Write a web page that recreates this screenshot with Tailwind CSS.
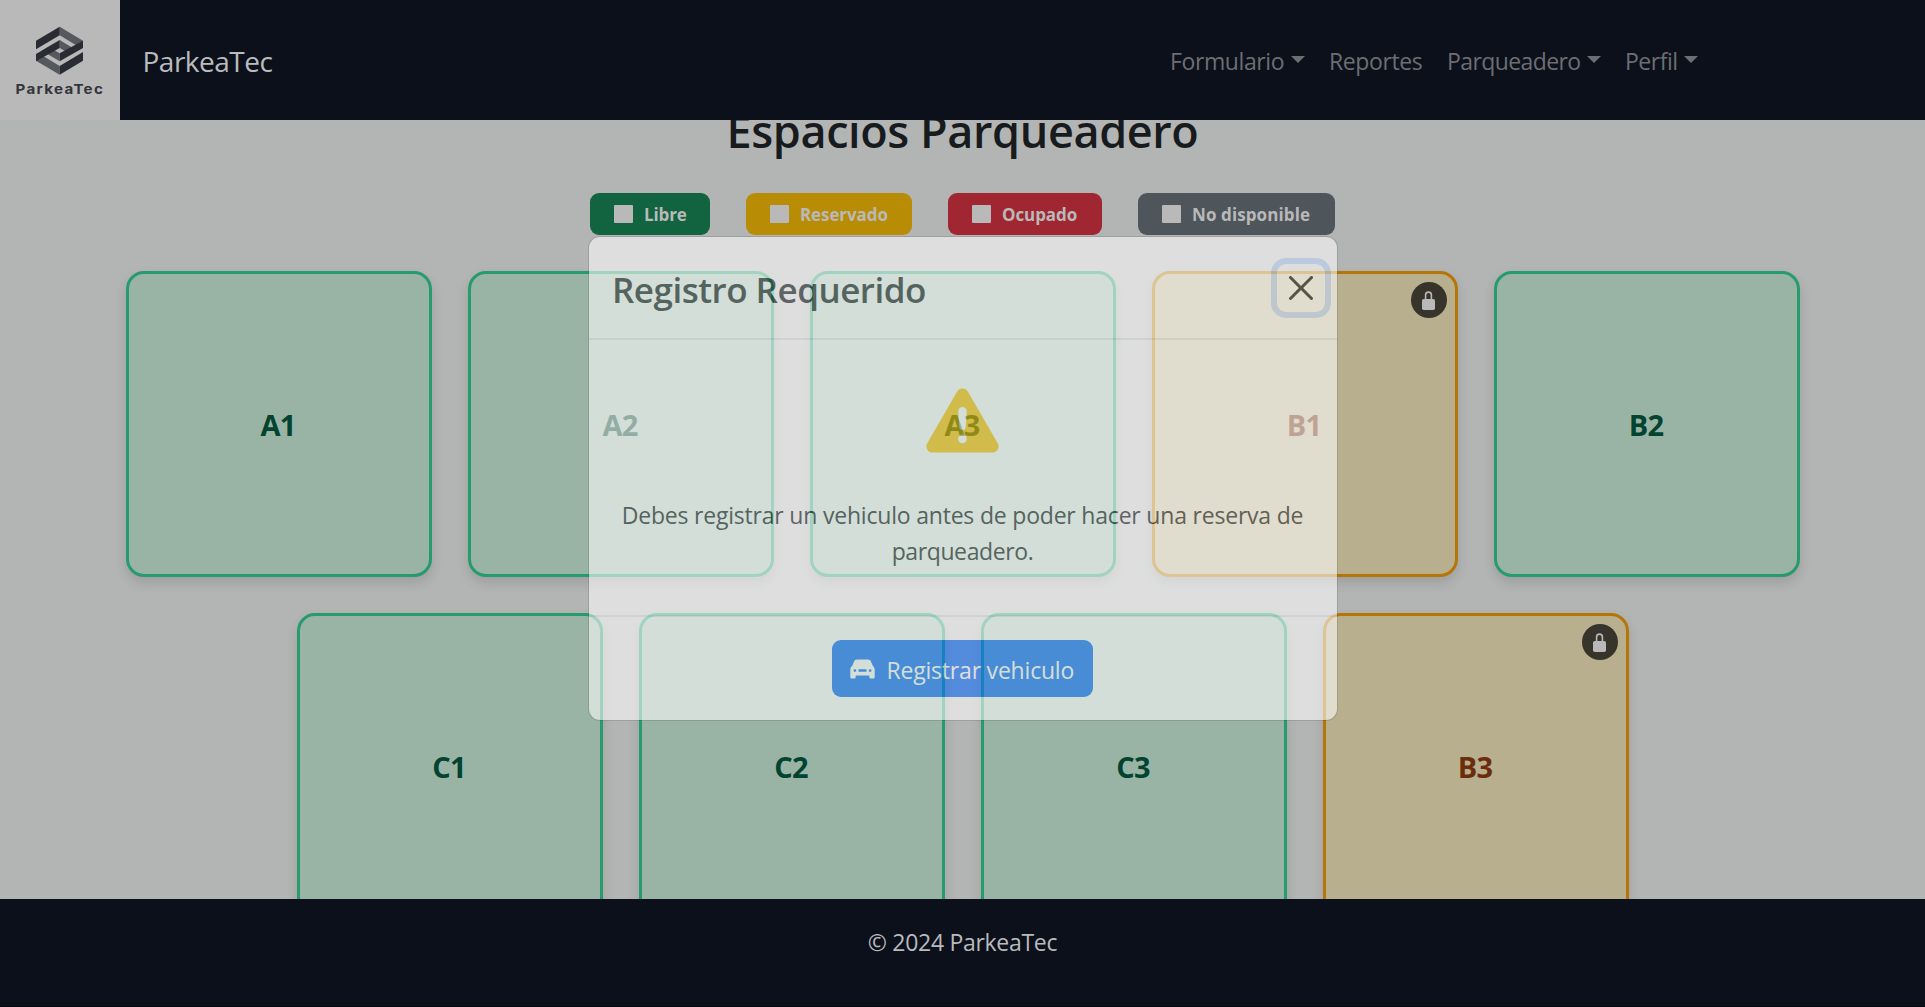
<!DOCTYPE html>
<html lang="es">
<head>
<meta charset="utf-8">
<title>ParkeaTec</title>
<script src="https://cdn.jsdelivr.net/npm/@tailwindcss/browser@4"></script>
</head>
<body class="relative flex h-[1007px] flex-col overflow-hidden bg-[#b3b5b4] font-['Open_Sans',sans-serif]">

<header class="flex h-[120px] shrink-0 items-center bg-[#0c101b] pr-[227px]">
  <div class="h-[120px] w-[119.5px] shrink-0 bg-[#b9b9b9]">
    <svg class="size-full" viewBox="0 0 119.5 120">
      <g transform="translate(10 20) scale(.33333)">
        <g fill="#57585d">
          <path d="M149 20 219 62V68L202 78 149 46Z"/>
          <path d="M149 164 78 122V116L96 106 149 138Z"/>
          <path d="M149 60 202 92 182 103 149 84Z"/>
          <path d="M149 124 96 92 116 81 149 100Z"/>
        </g>
        <g fill="#2a2c33">
          <path d="M149 20 78 62V88L149 46Z"/>
          <path d="M149 164 219 122V96L149 138Z"/>
          <path d="M149 60 78 102V124L149 84Z"/>
          <path d="M149 124 219 84V62L149 100Z"/>
        </g>
      </g>
      <text transform="translate(15.500 94) scale(1.12 1)" textLength="78" class="fill-[#33353b] font-['Inter'] text-[13.5px] font-bold">ParkeaTec</text>
    </svg>
  </div>
  <a class="mt-[2px] ml-[23px] text-[28px] tracking-[-0.5px] text-[#babbbd]">ParkeaTec</a>
  <nav class="mt-[2px] ml-auto flex items-center gap-6 text-[23px] tracking-[-0.4px] text-[#6c6e73]">
    <a class="flex items-center gap-[6px]"><span class="w-[115px]">Formulario</span><i class="mb-[3px] border-x-[7px] border-t-[7px] border-x-transparent border-t-[#6c6e73]"></i></a>
    <a class="w-[94px]">Reportes</a>
    <a class="flex items-center gap-[6px]"><span class="w-[134px] tracking-[-0.6px]">Parqueadero</span><i class="mb-[3px] border-x-[7px] border-t-[7px] border-x-transparent border-t-[#6c6e73]"></i></a>
    <a class="flex items-center gap-[6px]"><span class="w-[53px] tracking-[-0.5px]">Perfil</span><i class="mb-[3px] border-x-[7px] border-t-[7px] border-x-transparent border-t-[#6c6e73]"></i></a>
  </nav>
</header>

<main class="h-[779px] shrink-0 overflow-hidden">
  <h1 class="-mt-[18px] text-center text-[45px] leading-[58px] font-semibold tracking-[-0.4px] text-[#181b1e]">Espacios Parqueadero</h1>
  <div class="mt-[33px] flex justify-center gap-9 text-[17px] font-bold tracking-[-0.1px] text-[#b9b9b9]">
    <span class="flex h-[42px] w-[120px] items-center gap-[11px] rounded-[9px] bg-[#126340] pl-6"><i class="h-[18px] w-[19px] shrink-0 rounded-[1px] bg-[#b9b9b9]"></i><span class="pt-[2px]">Libre</span></span>
    <span class="flex h-[42px] w-[166px] items-center gap-[11px] rounded-[9px] bg-[#b98c05] pl-6"><i class="h-[18px] w-[19px] shrink-0 rounded-[1px] bg-[#b9b9b9]"></i><span class="pt-[2px]">Reservado</span></span>
    <span class="flex h-[42px] w-[154px] items-center gap-[11px] rounded-[9px] bg-[#a02632] pl-6"><i class="h-[18px] w-[19px] shrink-0 rounded-[1px] bg-[#b9b9b9]"></i><span class="pt-[2px]">Ocupado</span></span>
    <span class="flex h-[42px] w-[197px] items-center gap-[11px] rounded-[9px] bg-[#4e555b] pl-6 tracking-[0.1px]"><i class="h-[18px] w-[19px] shrink-0 rounded-[1px] bg-[#b9b9b9]"></i><span class="pt-[2px]">No disponible</span></span>
  </div>
  <div class="mt-9 flex flex-wrap justify-center gap-9 px-[100px] text-[29px] font-bold tracking-[-0.8px] text-[#03432f]">
    <div class="flex size-[306px] items-center justify-center rounded-[18px] border-3 border-[#279b70] bg-[#99b4a5] pt-px pr-px shadow-[0_6px_12px_rgb(0_0_0/0.12)]">A1</div>
    <div class="flex size-[306px] items-center justify-center rounded-[18px] border-3 border-[#279b70] bg-[#99b4a5] pt-px pr-px shadow-[0_6px_12px_rgb(0_0_0/0.12)]">A2</div>
    <div class="flex size-[306px] items-center justify-center rounded-[18px] border-3 border-[#279b70] bg-[#99b4a5] pt-px pr-px shadow-[0_6px_12px_rgb(0_0_0/0.12)]">A3</div>
    <div class="relative flex size-[306px] items-center justify-center rounded-[18px] border-3 border-[#b57607] bg-[#b8af8f] pt-px pr-px text-[#6b2d0c] shadow-[0_6px_12px_rgb(0_0_0/0.12)]">B1
      <span class="absolute top-2 right-2 flex size-9 items-center justify-center rounded-full bg-[#37342b]"><svg class="h-[19px] w-[13px]" viewBox="0 0 13 19"><path d="M3.600 9V4a2.900 2.900 0 0 1 5.800 0v5" fill="none" stroke="#b9b9b9" stroke-width="1.600"/><rect y="8" width="13" height="11" rx="1.8" fill="#b9b9b9"/></svg></span>
    </div>
    <div class="flex size-[306px] items-center justify-center rounded-[18px] border-3 border-[#279b70] bg-[#99b4a5] pt-px pr-px shadow-[0_6px_12px_rgb(0_0_0/0.12)]">B2</div>
    <div class="flex size-[306px] items-center justify-center rounded-[18px] border-3 border-[#279b70] bg-[#99b4a5] pt-px pr-px shadow-[0_6px_12px_rgb(0_0_0/0.12)]">C1</div>
    <div class="flex size-[306px] items-center justify-center rounded-[18px] border-3 border-[#279b70] bg-[#99b4a5] pt-px pr-px shadow-[0_6px_12px_rgb(0_0_0/0.12)]">C2</div>
    <div class="flex size-[306px] items-center justify-center rounded-[18px] border-3 border-[#279b70] bg-[#99b4a5] pt-px pr-px shadow-[0_6px_12px_rgb(0_0_0/0.12)]">C3</div>
    <div class="relative flex size-[306px] items-center justify-center rounded-[18px] border-3 border-[#b57607] bg-[#b8af8f] pt-px pr-px text-[#6b2d0c] shadow-[0_6px_12px_rgb(0_0_0/0.12)]">B3
      <span class="absolute top-2 right-2 flex size-9 items-center justify-center rounded-full bg-[#37342b]"><svg class="h-[19px] w-[13px]" viewBox="0 0 13 19"><path d="M3.600 9V4a2.900 2.900 0 0 1 5.800 0v5" fill="none" stroke="#b9b9b9" stroke-width="1.600"/><rect y="8" width="13" height="11" rx="1.8" fill="#b9b9b9"/></svg></span>
    </div>
  </div>
</main>

<footer class="h-[108px] shrink-0 border-b border-[#05070c] bg-[#0c101b] pt-[25px] text-center text-[23px] leading-9 tracking-[-0.3px] text-[#b9babc]">© 2024 ParkeaTec</footer>

<div class="absolute top-[236px] left-[588px] flex h-[485px] w-[750px] flex-col rounded-[12px] border border-black/20 bg-white bg-clip-padding text-[#212529] opacity-[0.565]">
  <div class="flex h-[103px] shrink-0 items-center justify-between border-b-2 border-[#e6e9ec] pr-[12px] pl-[23px]">
    <h2 class="pt-[5px] text-[35px] font-semibold tracking-[-0.5px]">Registro Requerido</h2>
    <button class="flex size-12 items-center justify-center rounded-[9px] shadow-[0_0_0_6px_rgb(13_110_253/0.25)]"><svg class="size-6 opacity-95" viewBox="0 0 16 16" fill="#000"><path d="M.293.293a1 1 0 0 1 1.414 0L8 6.586 14.293.293a1 1 0 1 1 1.414 1.414L9.414 8l6.293 6.293a1 1 0 0 1-1.414 1.414L8 9.414l-6.293 6.293a1 1 0 0 1-1.414-1.414L6.586 8 .293 1.707a1 1 0 0 1 0-1.414z"/></svg></button>
  </div>
  <div class="flex h-[275px] shrink-0 flex-col items-center pt-[48px] pr-px">
    <svg class="h-[65px] w-[73px]" viewBox="0 0 74 65" preserveAspectRatio="none"><path fill="#fbc107" fill-rule="evenodd" d="M37 .5c2.300 0 4.300 1.200 5.400 3.100L72.700 55.300c2.400 4-.5 9.200-5.200 9.200h-61c-4.700 0-7.600-5.200-5.200-9.200L31.600 3.600C32.700 1.700 34.700.5 37 .5ZM37 19c-2.600 0-4.500 2-4.300 4.600l1 15.400c.2 2 1.500 3 3.300 3s3.100-1 3.300-3l1-15.400C41.500 21 39.600 19 37 19Zm0 27.500a4.400 4.400 0 1 0 0 8.800 4.400 4.400 0 0 0 0-8.800Z"/></svg>
    <p class="mt-[44px] text-center text-[23px] leading-9 tracking-[-0.2px]">Debes registrar un vehiculo antes de poder hacer una reserva de<br><span class="tracking-[-0.4px]">parqueadero.</span></p>
  </div>
  <div class="flex grow items-start justify-center border-t-2 border-[#e6e9ec] pt-[23px] pr-[2px]">
    <button class="flex h-[57px] w-[261px] items-center rounded-[9px] bg-[#0d6efd] pl-[18px] text-[23px] tracking-[-0.2px] whitespace-nowrap text-white">
      <svg class="mr-[12px] h-[20px] w-[25px] shrink-0" viewBox="0 0 25 20"><path fill="#fff" fill-rule="evenodd" d="M7 .5h11c1.300 0 2.400.7 2.900 1.900l2 4.600c1.200.9 1.800 2.200 1.800 3.800v7.200c0 .9-.6 1.500-1.500 1.500h-2.400c-.9 0-1.500-.6-1.500-1.500v-1.500H5.700V18c0 .9-.6 1.500-1.500 1.500H1.800C.9 19.500.3 18.900.3 18v-7.200C.3 9.200.9 7.900 2.100 7l2-4.600C4.600 1.200 5.700.5 7 .5ZM4.900 10.200a1.400 1.400 0 1 0 0 2.800 1.400 1.400 0 0 0 0-2.800Zm15.200 0a1.400 1.400 0 1 0 0 2.800 1.400 1.400 0 0 0 0-2.800ZM8.500 10.200v2.600h8v-2.600Z"/></svg>
      <span class="pt-[3px]">Registrar vehiculo</span>
    </button>
  </div>
</div>
</body>
</html>
